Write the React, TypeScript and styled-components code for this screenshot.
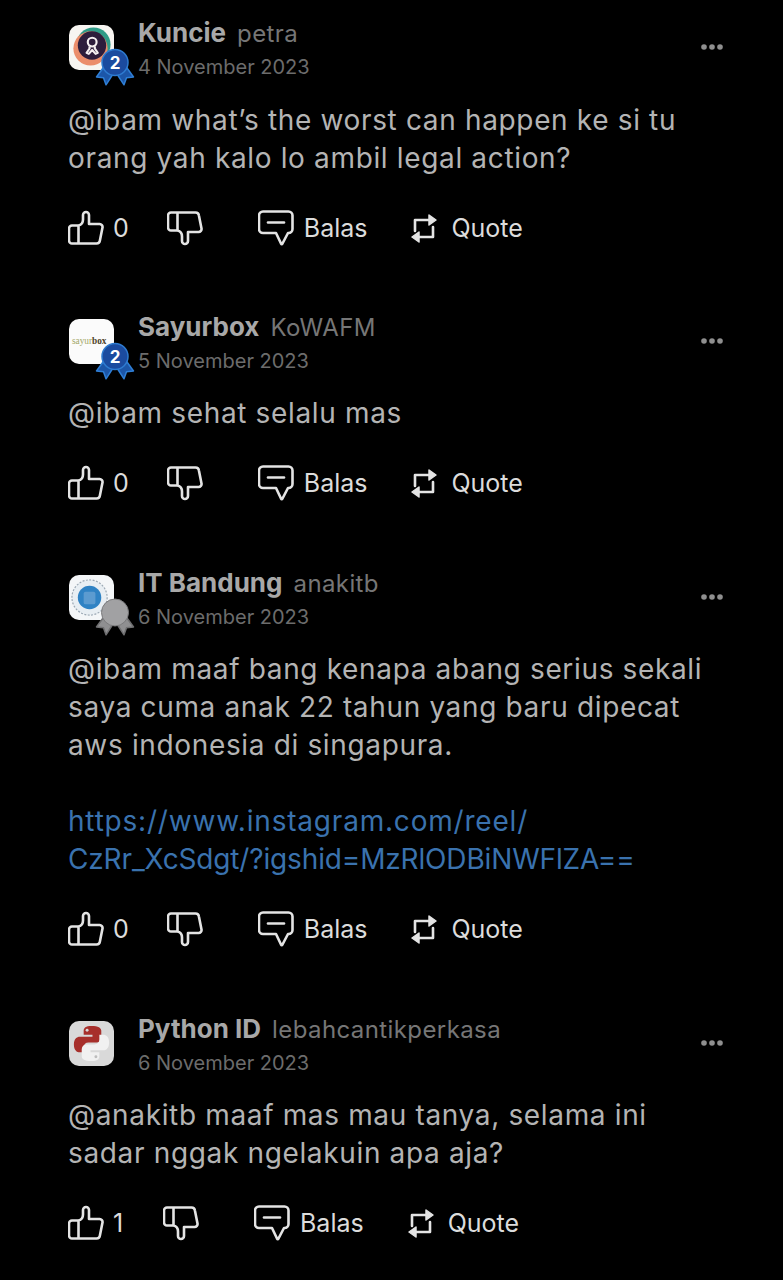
import { ReactNode } from 'react';
import styled, { createGlobalStyle } from 'styled-components';

const GlobalStyle = createGlobalStyle`
  html, body {
    margin: 0;
    padding: 0;
    background: #000;
  }
`;

const Page = styled.div`
  width: 783px;
  height: 1280px;
  overflow: hidden;
  background: #000;
  padding: 16px 59px 0 68px;
  box-sizing: border-box;
  font-family: Inter, "Liberation Sans", sans-serif;
`;

const Body = styled.p`
  margin: 16px 0 33px;
  color: #b4b4b4;
  font-size: 28px;
  letter-spacing: 0.65px;
  line-height: 38px;
  white-space: pre-line;
`;

const Comment = styled.article`
  margin-bottom: 65px;

  &:first-child {
    margin-bottom: 64px;

    ${Body} {
      margin-top: 17px;
    }
  }
`;

const Header = styled.header`
  display: flex;
  align-items: flex-start;
`;

const AvatarWrap = styled.div`
  position: relative;
  width: 45px;
  height: 45px;
  margin: 9px 24px 0 1px;
  flex: none;
`;

const AvatarFrame = styled.div<{ $bg: string }>`
  width: 45px;
  height: 45px;
  border-radius: 10px;
  overflow: hidden;
  background: ${(p) => p.$bg};
  display: flex;
  align-items: center;
  justify-content: center;
`;

const Badge = styled.svg`
  position: absolute;
  left: 26px;
  top: 23px;
`;

const Meta = styled.div`
  flex: 1;
`;

const NameRow = styled.div`
  display: flex;
  align-items: baseline;
  gap: 11px;
  height: 34px;
  line-height: 34px;
`;

const Name = styled.span`
  color: #a8a8a8;
  font-size: 26px;
  font-weight: 700;
`;

const Handle = styled.span`
  color: #767676;
  font-size: 24px;
  font-weight: 400;
  letter-spacing: 0.4px;
`;

const DateText = styled.div`
  color: #6c6c6c;
  font-size: 20px;
  line-height: 34px;
`;

const More = styled.svg`
  margin-top: 28px;
  flex: none;
`;

const BodyLink = styled.span<{ $spacing: number }>`
  color: #3a72ae;
  letter-spacing: ${(p) => p.$spacing}px;
`;

const Actions = styled.div`
  display: flex;
  align-items: center;
  height: 36px;
  color: #dcdcdc;
  font-size: 25px;
`;

const Action = styled.div<{ $gap: number; $after: number }>`
  display: flex;
  align-items: center;
  gap: ${(p) => p.$gap}px;
  margin-right: ${(p) => p.$after}px;
`;

const Count = styled.span`
  min-width: 12px;
`;

const Icon = styled.svg`
  fill: none;
  stroke: #e4e4e4;
  stroke-width: 2.6;
  stroke-linecap: round;
  stroke-linejoin: round;
  flex: none;
`;

const ThumbUp = ({ flip = false }: { flip?: boolean }) => (
  <Icon width="36" height="36" viewBox="0 0 36 36" style={flip ? { transform: 'scaleY(-1)' } : undefined}>
    <path d="M10.5 15.5c2.8-.6 4.500-3 4.500-6V5a3 3 0 0 1 6 0v9h10.500a3 3 0 0 1 3 3.600l-2.600 13a3.400 3.400 0 0 1-3.400 2.900H4a3 3 0 0 1-3-3V18.500a3 3 0 0 1 3-3h6.500v18" />
  </Icon>
);

const CommentIcon = () => (
  <Icon width="36" height="36" viewBox="0 0 36 36">
    <path d="M5 1.500h25.500a4 4 0 0 1 4 4V19a4 4 0 0 1-4 4H30l-5.500 10.500q-.8 1.200-1.500 0L18 23H5a4 4 0 0 1-4-4V5.500a4 4 0 0 1 4-4z" />
    <path d="M10 12.500h16" />
  </Icon>
);

const RepeatIcon = () => (
  <Icon width="27" height="30" viewBox="0 0 27 30">
    <path d="M4 18V7H20M22 14V24H6" />
    <path d="M18 2l7 5-7 5z" fill="#e4e4e4" strokeWidth="1.500" />
    <path d="M8 19l-7 5 7 5z" fill="#e4e4e4" strokeWidth="1.500" />
  </Icon>
);

const Ribbons = ({ fill, stroke }: { fill: string; stroke: string }) => (
  <g fill={fill} stroke={stroke} strokeWidth="1.500" strokeLinejoin="round">
    <path d="M8 20L1.500 29l7 .8 2.500 7 7-10.800z" />
    <path d="M32 20l6.500 9-7 .8-2.500 7-7-10.800z" />
  </g>
);

const BlueBadge = () => (
  <Badge width="40" height="40" viewBox="0 0 40 40">
    <Ribbons fill="#1c56a8" stroke="#2f7fd6" />
    <circle cx="20" cy="14.500" r="13" fill="#1b4b9f" stroke="#2e7bd0" strokeWidth="1.500" />
    <text x="20" y="20.500" fill="#fff" fontSize="17" fontWeight="700" textAnchor="middle" fontFamily="Inter, sans-serif">2</text>
  </Badge>
);

const SilverBadge = () => (
  <Badge width="40" height="40" viewBox="0 0 40 40">
    <Ribbons fill="#8f8f91" stroke="#6f6f71" />
    <circle cx="20" cy="14.500" r="13.500" fill="#a1a1a3" stroke="#7a7a7c" strokeWidth="1" />
  </Badge>
);

const KuncieLogo = () => (
  <AvatarFrame $bg="#f7f5f1">
    <svg width="45" height="45" viewBox="0 0 46 46">
      <circle cx="25" cy="20" r="17.500" fill="#2f9b87" />
      <circle cx="22" cy="24" r="17.500" fill="#eb8d6b" />
      <circle cx="23.500" cy="21" r="14.500" fill="#2d1d3c" />
      <circle cx="23.700" cy="17.500" r="4.500" fill="none" stroke="#f4eef0" strokeWidth="2.200" />
      <path d="M21 22v2l-3 4.500 2.200 1 3.500-4 3.500 4 2.200-1-3-4.500v-2" fill="none" stroke="#f4eef0" strokeWidth="2.200" strokeLinejoin="round" />
    </svg>
  </AvatarFrame>
);

const SayurboxLogo = () => (
  <AvatarFrame $bg="#fbfbfb">
    <svg width="45" height="45" viewBox="0 0 46 46">
      <text x="3" y="26" fontSize="9.500" fontFamily="'Liberation Serif', serif">
        <tspan fill="#a3a868">sayur</tspan>
        <tspan fill="#4d3f28" fontWeight="700">box</tspan>
      </text>
    </svg>
  </AvatarFrame>
);

const ItbLogo = () => (
  <AvatarFrame $bg="#f4f6f8">
    <svg width="45" height="45" viewBox="0 0 46 46">
      <circle cx="21" cy="23" r="18" fill="#e8eef3" stroke="#9aa7b3" strokeWidth="1.200" strokeDasharray="2 1.500" />
      <circle cx="21" cy="23" r="12" fill="#2f82c4" />
      <rect x="15" y="17" width="12" height="13" rx="2" fill="#5c9bd0" />
    </svg>
  </AvatarFrame>
);

const PythonLogo = () => (
  <AvatarFrame $bg="#d9d9d9">
    <svg width="45" height="45" viewBox="0 0 46 46">
      <path d="M23 5c-6 0-8 2-8 5v4h9v2H11c-3 0-6 2-6 8s3 8 6 8h4v-5c0-3 2-5 5-5h8c3 0 5-2 5-5v-7c0-3-3-5-10-5z" fill="#a72f2b" />
      <circle cx="18.500" cy="9.500" r="1.500" fill="#d9d9d9" />
      <path d="M23 41c6 0 8-2 8-5v-4h-9v-2h13c3 0 6-2 6-8s-3-8-6-8h-4v5c0 3-2 5-5 5h-8c-3 0-5 2-5 5v7c0 3 3 5 10 5z" fill="#f1f1f1" />
      <circle cx="27.500" cy="36.500" r="1.500" fill="#bdbdbd" />
    </svg>
  </AvatarFrame>
);

interface Item {
  name: string;
  handle: string;
  date: string;
  logo: ReactNode;
  badge?: ReactNode;
  body: ReactNode;
  likes: number;
}

const items: Item[] = [
  {
    name: 'Kuncie',
    handle: 'petra',
    date: '4 November 2023',
    logo: <KuncieLogo />,
    badge: <BlueBadge />,
    body: '@ibam what’s the worst can happen ke si tu\norang yah kalo lo ambil legal action?',
    likes: 0,
  },
  {
    name: 'Sayurbox',
    handle: 'KoWAFM',
    date: '5 November 2023',
    logo: <SayurboxLogo />,
    badge: <BlueBadge />,
    body: '@ibam sehat selalu mas',
    likes: 0,
  },
  {
    name: 'IT Bandung',
    handle: 'anakitb',
    date: '6 November 2023',
    logo: <ItbLogo />,
    badge: <SilverBadge />,
    body: (
      <>
        {'@ibam maaf bang kenapa abang serius sekali\nsaya cuma anak 22 tahun yang baru dipecat\naws indonesia di singapura.\n\n'}
        <BodyLink $spacing={0.8}>{'https://www.instagram.com/reel/\n'}</BodyLink>
        <BodyLink $spacing={-0.15}>CzRr_XcSdgt/?igshid=MzRlODBiNWFlZA==</BodyLink>
      </>
    ),
    likes: 0,
  },
  {
    name: 'Python ID',
    handle: 'lebahcantikperkasa',
    date: '6 November 2023',
    logo: <PythonLogo />,
    body: '@anakitb maaf mas mau tanya, selama ini\nsadar nggak ngelakuin apa aja?',
    likes: 1,
  },
];

const App = () => (
  <>
    <GlobalStyle />
    <Page>
      {items.map((item) => (
        <Comment key={item.name}>
          <Header>
            <AvatarWrap>
              {item.logo}
              {item.badge}
            </AvatarWrap>
            <Meta>
              <NameRow>
                <Name>{item.name}</Name>
                <Handle>{item.handle}</Handle>
              </NameRow>
              <DateText>{item.date}</DateText>
            </Meta>
            <More width="24" height="6" viewBox="0 0 24 6">
              <circle cx="4" cy="3" r="2.800" fill="#8f8f8f" />
              <circle cx="12" cy="3" r="2.800" fill="#8f8f8f" />
              <circle cx="20" cy="3" r="2.800" fill="#8f8f8f" />
            </More>
          </Header>
          <Body>{item.body}</Body>
          <Actions>
            <Action $gap={9} $after={38}>
              <ThumbUp />
              <Count>{item.likes}</Count>
            </Action>
            <Action $gap={0} $after={55}>
              <ThumbUp flip />
            </Action>
            <Action $gap={10} $after={44}>
              <CommentIcon />
              <span>Balas</span>
            </Action>
            <Action $gap={13} $after={0}>
              <RepeatIcon />
              <span>Quote</span>
            </Action>
          </Actions>
        </Comment>
      ))}
    </Page>
  </>
);

export default App;
